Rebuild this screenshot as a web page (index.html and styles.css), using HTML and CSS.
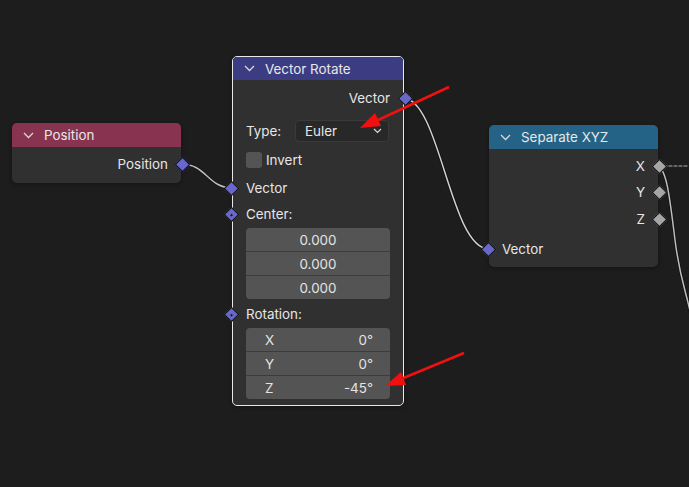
FILE: index.html
```html
<!DOCTYPE html>
<html>
<head>
<meta charset="utf-8">
<link rel="stylesheet" href="styles.css">
</head>
<body>
<div class="canvas">
  <svg class="wires" width="689" height="487" viewBox="0 0 689 487">
    <g fill="none" stroke-linecap="round">
      <path d="M181,164 C207,164 207,188 233,188" stroke="#111" stroke-width="3"/>
      <path d="M181,164 C207,164 207,188 233,188" stroke="#bdbdbd" stroke-width="1.5"/>
      <path d="M403,98 C440,98 450,249 489,249" stroke="#111" stroke-width="3"/>
      <path d="M403,98 C440,98 450,249 489,249" stroke="#cfcfcf" stroke-width="1.5"/>
      <path d="M658,166 C667,170 670,200 675,240 S686,290 692,320" stroke="#111" stroke-width="3"/>
      <path d="M658,166 C667,170 670,200 675,240 S686,290 692,320" stroke="#bdbdbd" stroke-width="1.5"/>
      <path d="M664,166 L689,166" stroke="#b0b0b0" stroke-width="1.2" stroke-dasharray="3 2"/>
    </g>
  </svg>

  <div class="node pos-node">
    <div class="head head-pos"><svg class="chev" width="11" height="7" viewBox="0 0 11 7"><path d="M1,1 L5.5,5.5 L10,1" fill="none" stroke="#d8d8d8" stroke-width="1.3"/></svg><span>Position</span></div>
    <div class="body">
      <div class="row out r-pos">Position<i class="sock vec s-out"></i></div>
    </div>
  </div>

  <div class="node rot-node">
    <div class="head head-rot"><svg class="chev" width="11" height="7" viewBox="0 0 11 7"><path d="M1,1 L5.5,5.5 L10,1" fill="none" stroke="#d8d8d8" stroke-width="1.3"/></svg><span>Vector Rotate</span></div>
    <div class="body">
      <div class="row out r-vout">Vector<i class="sock vec s-out"></i></div>
      <div class="row prop r-type">
        <span class="lbl">Type:</span>
        <div class="drop"><span>Euler</span><svg width="9" height="6" viewBox="0 0 9 6"><path d="M1,1 L4.5,4.5 L8,1" fill="none" stroke="#d8d8d8" stroke-width="1.2"/></svg></div>
      </div>
      <div class="row prop r-inv"><span class="check"></span><span>Invert</span></div>
      <div class="row in r-vin"><i class="sock vec s-in"></i>Vector</div>
      <div class="row in r-center"><i class="sock vec dot s-in"></i>Center:</div>
      <div class="fields">
        <div class="fld c">0.000</div>
        <div class="fld c">0.000</div>
        <div class="fld c">0.000</div>
      </div>
      <div class="row in r-rot"><i class="sock vec dot s-in"></i>Rotation:</div>
      <div class="fields">
        <div class="fld lr"><span>X</span><span>0°</span></div>
        <div class="fld lr"><span>Y</span><span>0°</span></div>
        <div class="fld lr"><span>Z</span><span>-45°</span></div>
      </div>
    </div>
  </div>

  <div class="node sep-node">
    <div class="head head-sep"><svg class="chev" width="11" height="7" viewBox="0 0 11 7"><path d="M1,1 L5.5,5.5 L10,1" fill="none" stroke="#d8d8d8" stroke-width="1.3"/></svg><span>Separate XYZ</span></div>
    <div class="body">
      <div class="row out r-x">X<i class="sock gray s-out"></i></div>
      <div class="row out r-yz">Y<i class="sock gray s-out"></i></div>
      <div class="row out r-yz">Z<i class="sock gray s-out"></i></div>
      <div class="row in r-sv"><i class="sock vec s-in"></i>Vector</div>
    </div>
  </div>

  <svg class="arrows" width="689" height="487" viewBox="0 0 689 487">
    <line x1="449" y1="87" x2="376" y2="121" stroke="#f01010" stroke-width="2.6"/>
    <polygon points="360,128 375,113 381,126" fill="#f01010"/>
    <line x1="464" y1="353" x2="401" y2="379" stroke="#f01010" stroke-width="2.6"/>
    <polygon points="385,386 401,372 406,385" fill="#f01010"/>
  </svg>
</div>
</body>
</html>
```

FILE: styles.css
```css
* { box-sizing: border-box; }
html, body { margin: 0; padding: 0; background: #1d1d1d; }
body {
  font-family: Inter, "Noto Sans", "DejaVu Sans", sans-serif;
  font-size: 13.4px;
  color: #e6e6e6;
}
.canvas {
  position: relative;
  width: 689px;
  height: 487px;
  overflow: hidden;
  background: #1d1d1d;
}
.wires, .arrows {
  position: absolute;
  left: 0;
  top: 0;
}
.wires { z-index: 0; }
.arrows { z-index: 5; pointer-events: none; }

.node {
  position: absolute;
  background: #303030;
  border-radius: 5px;
  z-index: 2;
  box-shadow: 0 1px 4px rgba(0,0,0,0.35);
}
.pos-node { left: 12px; top: 123px; width: 169px; height: 60px; }
.rot-node { left: 232px; top: 56px; width: 172px; height: 350px; border: 1px solid #e8e8e8; }
.sep-node { left: 489px; top: 125px; width: 169px; height: 142px; }

.head {
  display: flex;
  align-items: center;
  height: 24px;
  border-radius: 5px 5px 0 0;
  padding-left: 11px;
  color: #e8e8e8;
}
.head .chev { margin-right: 10px; }
.head-pos { background: #883450; }
.head-rot { background: #3c3c83; height: 23px; border-radius: 4px 4px 0 0; }
.head-sep { background: #246385; }

.body {
  display: flex;
  flex-direction: column;
  position: relative;
}
.row {
  position: relative;
  display: flex;
  align-items: center;
}
.row.out { justify-content: flex-end; padding-right: 13px; }
.row.in { padding-left: 13px; }
.row.prop { padding-left: 13px; }

.pos-node .body { padding-top: 5px; }
.r-pos { height: 24px; }

.rot-node .body { padding-top: 6px; }
.r-vout { height: 24px; }
.r-type { height: 22px; margin-top: 10px; }
.r-inv { height: 20px; margin-top: 8px; }
.r-vin { height: 24px; margin-top: 6px; }
.r-center { height: 24px; margin-top: 2px; }
.r-rot { height: 24px; margin-top: 3px; }

.lbl { width: 49px; }
.drop {
  width: 94px;
  height: 22px;
  background: #282828;
  border: 1px solid #3a3a3a;
  border-radius: 4px;
  display: flex;
  align-items: center;
  justify-content: space-between;
  padding: 0 6px 0 9px;
}
.check {
  width: 16px;
  height: 16px;
  background: #545454;
  border-radius: 3px;
  margin-right: 4px;
}

.fields {
  margin: 2px 13px 0 13px;
  border-radius: 4px;
  overflow: hidden;
  background: #545454;
  display: flex;
  flex-direction: column;
}
.fld {
  height: 24px;
  display: flex;
  align-items: center;
  border-top: 1px solid #3b3b3b;
  color: #e4e4e4;
}
.fld:first-child { border-top: none; height: 23px; }
.fld.c { justify-content: center; }
.fld.lr { justify-content: space-between; padding: 0 17px 0 19px; }

.sock {
  position: absolute;
  display: block;
  width: 11px;
  height: 11px;
  transform: rotate(45deg);
  border: 1px solid #101010;
  top: 50%;
  margin-top: -5.5px;
}
.sock.vec { background: #6767cc; }
.sock.gray { background: #a6a6a6; }
.sock.dot::after {
  content: "";
  position: absolute;
  left: 3.5px;
  top: 3.5px;
  width: 2px;
  height: 2px;
  background: #1a1a1a;
}
.s-out { right: -6.5px; }
.s-in { left: -6.5px; }
.rot-node .s-out { right: -7.5px; }
.rot-node .s-in { left: -7.5px; }

.sep-node .body { padding-top: 5px; }
.r-x { height: 24px; }
.r-yz { height: 26px; margin-top: 1px; }
.r-sv { height: 24px; margin-top: 5px; }
```
